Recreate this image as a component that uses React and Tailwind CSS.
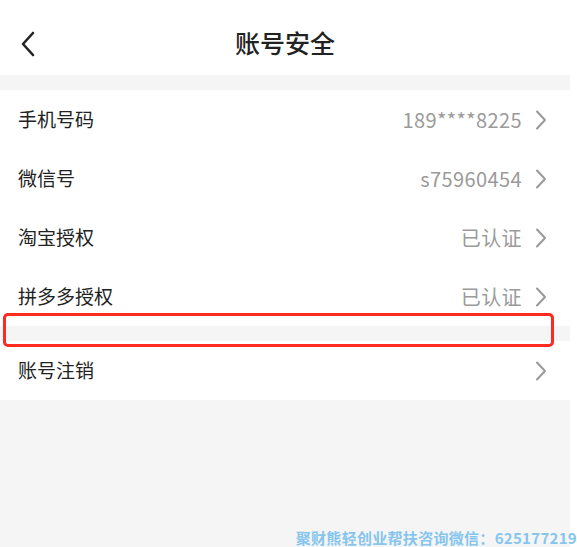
const rows = [
  { label: '手机号码', value: '189****8225' },
  { label: '微信号', value: 's75960454' },
  { label: '淘宝授权', value: '已认证' },
  { label: '拼多多授权', value: '已认证' },
];

function Chevron() {
  return (
    <svg width="12" height="20" viewBox="0 0 12 20" fill="none" className="text-[#999]">
      <path d="M2 1.5L10 10L2 18.5" stroke="currentColor" strokeWidth="2" strokeLinecap="round" strokeLinejoin="round" />
    </svg>
  );
}

function Row({ label, value }) {
  return (
    <div className="flex h-[59px] items-center justify-between bg-white pl-[18px] pr-[23px]">
      <span className="text-[19px] text-[#222]">{label}</span>
      <div className="flex items-center gap-[13px]">
        {value && <span className="text-[20px] tracking-[0.4px] text-[#9a9a9a]">{value}</span>}
        <Chevron />
      </div>
    </div>
  );
}

export default function App() {
  return (
    <main
      className="relative h-[547px] w-[577px] overflow-hidden bg-white"
      style={{ fontFamily: '"Noto Sans CJK SC", "Noto Sans", sans-serif' }}
    >
      <div className="flex h-full w-[570px] flex-col bg-[#f5f5f5]">
        <header className="relative flex h-[75px] items-center justify-center bg-white pt-[10px]">
          <svg
            width="18"
            height="26"
            viewBox="0 0 18 26"
            fill="none"
            className="absolute left-[19px] top-[31px] text-[#222]"
          >
            <path d="M14 2L4 13L14 24" stroke="currentColor" strokeWidth="2.6" strokeLinecap="round" strokeLinejoin="round" />
          </svg>
          <h1 className="text-[25px] font-medium text-[#222]">账号安全</h1>
        </header>

        <div className="mt-[15px]">
          {rows.map((row) => (
            <Row key={row.label} {...row} />
          ))}
        </div>

        <div className="mt-[15px]">
          <Row label="账号注销" />
        </div>
      </div>

      <div className="pointer-events-none absolute left-[3px] top-[313px] h-[34px] w-[551px] rounded-[5px] border-[3px] border-[#ff2a1f]" />

      <div className="absolute bottom-[-2px] right-0 text-[15px] font-bold tracking-[0.3px] text-[#86c5ef]">
        聚财熊轻创业帮扶咨询微信：625177219
      </div>
    </main>
  );
}
